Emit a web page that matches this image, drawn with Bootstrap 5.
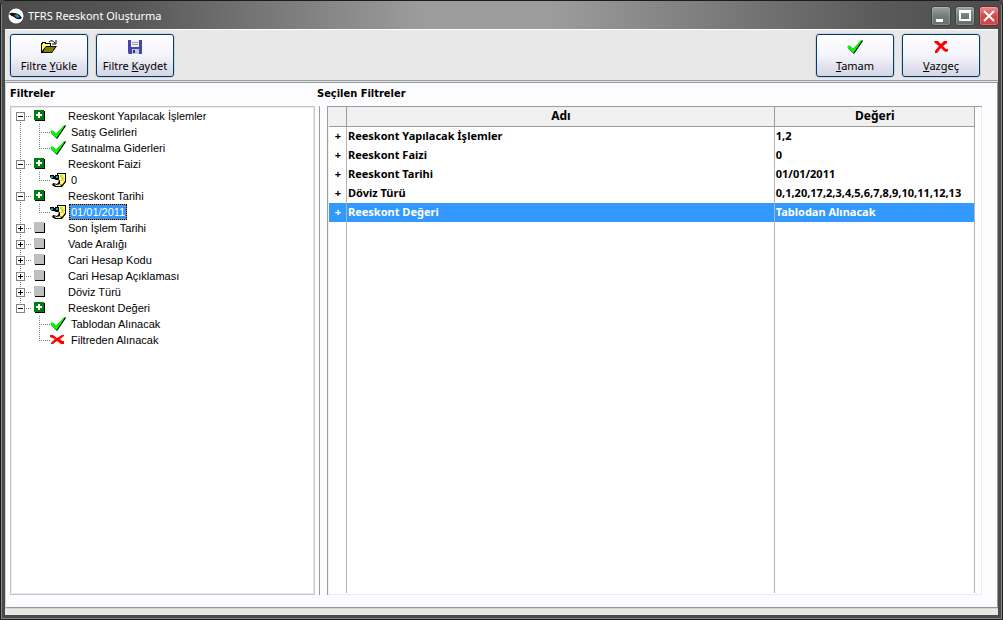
<!DOCTYPE html>
<html lang="tr">
<head>
<meta charset="utf-8">
<meta name="viewport" content="width=device-width, initial-scale=1">
<title>TFRS Reeskont Oluşturma</title>
<link href="https://cdn.jsdelivr.net/npm/bootstrap@5.3.0/dist/css/bootstrap.min.css" rel="stylesheet">
<style>
body { font: 11px/16px "DejaVu Sans Condensed", "DejaVu Sans", sans-serif; color: #000; background: #4a4a4a; }
.window { border: 1px solid #1c1c1c; border-radius: 6px 6px 0 0; box-shadow: inset 0 0 0 1px #858585; padding: 0 4px 4px; background: #4a4a4a; }
.titlebar { height: 28px; margin: 0 -3px; padding: 2px 2px 0 6px; color: #fff; font: 11px/26px "Noto Sans", sans-serif;
  background: linear-gradient(90deg, #4c4c4c, #555 12%, #9c9c9c 42%, #9c9c9c 55%, #5a5a5a 88%, #4c4c4c); }
.wbtn { width: 20px; height: 20px; border: 1px solid #3c4242; border-radius: 3px; background: linear-gradient(#9ba3a3, #737c7c 50%, #667070); box-shadow: inset 0 0 0 1px #ffffff30; }
.wbtn.close-btn { background: linear-gradient(#e89090, #d0484c 50%, #d0484c); border-color: #702a2c; }
.toolbar { height: 52px; padding: 4px 18px 0 5px; background: #e8e8e8; border-top: 1px solid #fff; border-bottom: 1px solid #9b9b9b; }
.tool { width: 78px; height: 43px; font: 11px/14px "Noto Sans", sans-serif; border: 1px solid #003c74; border-radius: 3px; color: #000;
  background: linear-gradient(#fff, #f4f4fb 50%, #d4d4e4); box-shadow: 0 0 0 1px #cdd3d8; }
.tool:hover { border-color: #003c74; color: #000; }
.tool svg { display: block; height: 16px; margin: 0 auto 4px; }
.workspace { background: #fcfcfe; border: 1px solid #8f9a9c; border-left-color: #ccd4d6; padding: 3px 15px 12px 4px; box-shadow: 0 -1px #e8e8e8; margin-top: 1px; }
.heading { font: bold 11px/16px "DejaVu Sans Condensed", sans-serif; margin: 0 0 4px; }
.grid-heading { margin-left: -3px; }
.left-pane { width: 310px; }
.tree { font: 11px/16px "Liberation Sans", Arial, sans-serif; border: 1px solid #c6c6c6; box-shadow: inset 0 0 0 1px #e9e9e9; padding: 1px; background: #fff; margin-right: 4px; }
.splitter { border-right: 1px solid #9b9ba0; }
.node { display: flex; align-items: center; height: 16px; white-space: nowrap; }
.rail { width: 14px; height: 16px; padding-left: 4px; display: flex; align-items: center;
  background: repeating-linear-gradient(#808080 0 1px, transparent 1px 2px) 8px 0 / 1px 16px no-repeat; }
.rail.first { background-position: 8px 8px; }
.rail.last { background-size: 1px 8px; }
.rail.none { background: none; }
.expander { width: 9px; height: 9px; padding: 0; border: 1px solid #848484; background: #fff; display: flex; }
.stub { width: 8px; height: 1px; background: repeating-linear-gradient(90deg, #808080 0 1px, transparent 1px 2px) 0 0 / 6px 1px no-repeat; }
.branch { width: 24px; height: 16px; background:
  repeating-linear-gradient(#808080 0 1px, transparent 1px 2px) 13px 0 / 1px 16px no-repeat,
  repeating-linear-gradient(90deg, #808080 0 1px, transparent 1px 2px) 13px 8px / 11px 1px no-repeat; }
.branch.end { background-size: 1px 8px, 11px 1px; }
.node > svg { flex: none; }
.group-name { margin-left: 22px; }
.leaf-name { margin-left: 3px; padding: 0 2px; }
.leaf-name.chosen { background: #39f; color: #fff; outline: 1px dotted #000; outline-offset: -1px; box-shadow: inset 0 0 0 1px #d08030; }
.grid-box { margin-left: 7px; border: solid #9b9ba0; border-width: 1px 0 0 1px; box-shadow: inset -1px -1px #ececf0, inset 1px 0 #f0f0f0; background: #fff; padding: 0 7px 2px 1px; }
.filters { table-layout: fixed; height: 100%; width: 100%; border-collapse: separate; border-spacing: 0; font: bold 11px/18px "Noto Sans", sans-serif; }
.filters th, .filters td { height: 19px; padding: 0 0 0 1px; border-right: 1px solid #b4b4b4; white-space: nowrap; overflow: hidden; vertical-align: top; }
.filters th { height: 20px; font-size: 12px; background: #f0f0f0; border-right-color: #9b9b9b; border-bottom: 1px solid #9b9b9b; text-align: center; }
.filters td:first-child { text-align: center; }
.filters .picked td { background: #39f; color: #fff; }
.filters .rest td { height: auto; }
.footer-strip { height: 7px; background: #e6e9e6; border-top: 1px solid #d8d5c4; }
</style>
<script src="https://cdn.jsdelivr.net/npm/bootstrap@5.3.0/dist/js/bootstrap.bundle.min.js"></script>
</head>
<body>
<svg class="d-none" aria-hidden="true">
  <symbol id="plus" viewBox="0 0 7 7"><path d="M1 3.5h5M3.5 1v5" stroke="#000"/></symbol>
  <symbol id="minus" viewBox="0 0 7 7"><path d="M1 3.5h5" stroke="#000"/></symbol>
  <symbol id="on" viewBox="0 0 12 12"><path d="M1 1h10v10H1z" fill="#000"/><path d="M0 0h10v10H0z" fill="#007d10"/><path d="M4 2h2v2h2v2H6v2H4V6H2V4h2z" fill="#fff"/></symbol>
  <symbol id="off" viewBox="0 0 12 12"><path d="M1 1h10v10H1z" fill="#000"/><path d="M0 0h10v10H0z" fill="#c0c0c0"/></symbol>
  <symbol id="check" viewBox="0 0 16 16"><path d="M1 9l2-2 3 3 9-9 1 1-9 13z" fill="#000"/><path d="M0 8l2-2 4 4L14 1l1 .5L6.5 14z" fill="#0f0"/></symbol>
  <symbol id="cross" viewBox="0 0 16 16"><path d="M0 3h3l4 3 5-3h2v1l-4 3 2 2h2v3h-3L7 9l-4 3H1v-1l4-4-5-2z" fill="red"/></symbol>
  <symbol id="note" viewBox="0 0 16 16"><path d="M7 1h9v9l-4 5H5l-3-2 1-2 4 1 2-3-2-2z" fill="#000"/><path d="M8 2h7v7l-3 4-2-1V9L8 6z" fill="#ffff70"/><path d="M4 12l3 1 3-1 1 2H6z" fill="#ffff70"/><path d="M10 4h3M11 6h3M11 8h3" stroke="#b8b040"/><path d="M0 3h4v1h1V3h4v4L8 8H6L4 7H2L0 5z" fill="#000"/><path d="M1 4h2v2H1zM6 4h2v2H6z" fill="#0aa"/></symbol>
</svg>
<div class="window vh-100 d-flex flex-column">
  <header class="titlebar d-flex align-items-center">
    <svg width="16" height="16" viewBox="0 0 16 16" class="me-1" aria-hidden="true"><circle cx="8" cy="8" r="7.5" fill="#fff"/><path d="M1 6q2-2 5-1 5 0 8 5-4 3-8-1Q3 8 1 6z" fill="#111"/><path d="M6 7l3-1 3 3-3 1z" fill="#1f86b8"/></svg>
    <span class="me-auto">TFRS Reeskont Oluşturma</span>
    <div class="d-flex gap-1">
      <button class="wbtn p-0 d-flex" aria-label="Simge durumuna küçült"><svg width="18" height="18"><path d="M4 12h7v3H4z" fill="#fff"/></svg></button>
      <button class="wbtn p-0 d-flex" aria-label="Ekranı kapla"><svg width="18" height="18"><path d="M3 3h12v11H3zM5 6v6h8V6z" fill="#fff" fill-rule="evenodd"/></svg></button>
      <button class="wbtn close-btn p-0 d-flex" aria-label="Kapat"><svg width="18" height="18"><path d="M4 4l10 10M14 4L4 14" stroke="#fff" stroke-width="2"/></svg></button>
    </div>
  </header>
  <div class="toolbar d-flex">
    <button class="tool btn p-0 me-2"><svg width="18" viewBox="0 0 18 16"><path d="M1 4h1V3h4v1h5v3h6l-5 7H1z" fill="#000"/><path d="M2 5h1V4h2v1h5v2H6l-4 5z" fill="#ffff60"/><path d="M6 8h9l-3 5H3z" fill="#808000"/><path d="M9 3q3-3 6 1M16 1v4h-4" fill="none" stroke="#000"/></svg>Filtre <u>Y</u>ükle</button>
    <button class="tool btn p-0 me-auto"><svg width="14" viewBox="0 0 14 16"><path d="M0 1h14v14H1l-1-1z" fill="#4646a8"/><path d="M3 1h8v7H3z" fill="#f0f0f8"/><path d="M4 3.5h6M4 5.5h6" stroke="#a0a0a0"/><path d="M4 10h7v5H4z" fill="#c8c8e0"/><path d="M5 11h2v3H5z" fill="#30307c"/></svg>Filtre <u>K</u>aydet</button>
    <button class="tool btn p-0 me-2"><svg width="16"><use href="#check"/></svg><u>T</u>amam</button>
    <button class="tool btn p-0"><svg width="14" viewBox="0 0 14 16"><path d="M0 2h4l3 3 3-3h3v2L9 7l3 3h2v2l-2 1-2-1-3-3-4 5H1v-2l4-5-4-3z" fill="red"/></svg><u>V</u>azgeç</button>
  </div>
  <main class="workspace flex-grow-1 d-flex">
    <section class="left-pane d-flex flex-column flex-shrink-0">
      <h2 class="heading">Filtreler</h2>
      <div class="splitter flex-grow-1 d-flex">
        <ul class="tree list-unstyled flex-grow-1 mb-0" id="tree"></ul>
      </div>
    </section>
    <section class="right-pane d-flex flex-column flex-grow-1">
      <h2 class="heading grid-heading">Seçilen Filtreler</h2>
      <div class="grid-box flex-grow-1">
        <table class="filters">
          <colgroup><col style="width:18px"><col><col style="width:31%"></colgroup>
          <thead><tr><th></th><th>Adı</th><th>Değeri</th></tr></thead>
          <tbody>
            <tr><td>+</td><td>Reeskont Yapılacak İşlemler</td><td>1,2</td></tr>
            <tr><td>+</td><td>Reeskont Faizi</td><td>0</td></tr>
            <tr><td>+</td><td>Reeskont Tarihi</td><td>01/01/2011</td></tr>
            <tr><td>+</td><td>Döviz Türü</td><td>0,1,20,17,2,3,4,5,6,7,8,9,10,11,12,13</td></tr>
            <tr class="picked"><td>+</td><td>Reeskont Değeri</td><td>Tablodan Alınacak</td></tr>
            <tr class="rest"><td></td><td></td><td></td></tr>
          </tbody>
        </table>
      </div>
    </section>
  </main>
  <div class="footer-strip"></div>
</div>
<script>
const groups = [
  ["Reeskont Yapılacak İşlemler", [["check", "Satış Gelirleri"], ["check", "Satınalma Giderleri"]]],
  ["Reeskont Faizi", [["note", "0"]]],
  ["Reeskont Tarihi", [["note", "01/01/2011", true]]],
  ["Son İşlem Tarihi"], ["Vade Aralığı"], ["Cari Hesap Kodu"], ["Cari Hesap Açıklaması"], ["Döviz Türü"],
  ["Reeskont Değeri", [["check", "Tablodan Alınacak"], ["cross", "Filtreden Alınacak"]]]
];
const icon = (id, size) => `<svg width="${size}" height="${size}"><use href="#${id}"/></svg>`;
document.getElementById("tree").innerHTML = groups.map(([name, kids], i) => {
  const last = i === groups.length - 1;
  const rail = i === 0 ? "first" : last ? "last" : "";
  const children = (kids || []).map(([pic, text, chosen], k) =>
    `<li class="node"><span class="rail ${last ? "none" : ""}"></span><span class="branch ${k === kids.length - 1 ? "end" : ""}"></span>${icon(pic, 16)}<span class="leaf-name ${chosen ? "chosen" : ""}">${text}</span></li>`).join("");
  return `<li><div class="node"><span class="rail ${rail}"><button class="expander" aria-label="${name}">${icon(kids ? "minus" : "plus", 7)}</button></span><span class="stub"></span>${icon(kids ? "on" : "off", 12)}<span class="group-name">${name}</span></div>${kids ? `<ul class="list-unstyled mb-0">${children}</ul>` : ""}</li>`;
}).join("");
</script>
</body>
</html>
